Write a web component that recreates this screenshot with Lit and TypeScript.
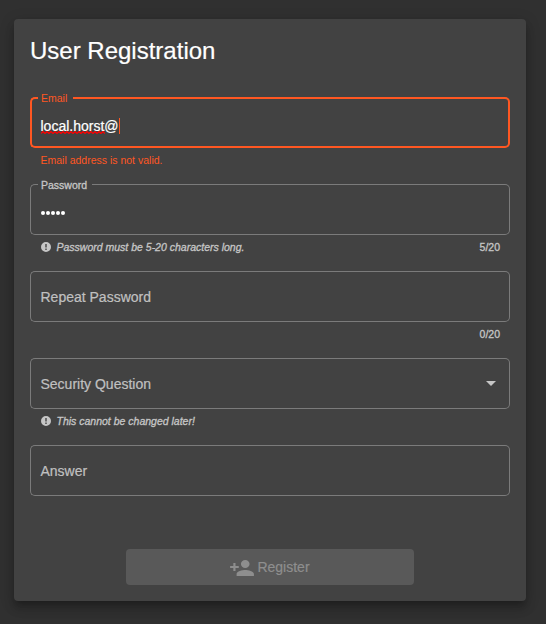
import { LitElement, html, css, svg, nothing } from "lit";
import { customElement, property } from "lit/decorators.js";
import { classMap } from "lit/directives/class-map.js";

@customElement("form-field")
export class FormField extends LitElement {
  @property() label = "";
  @property() hint = "";
  @property() error = "";
  @property() counter = "";
  @property({ type: Boolean }) floating = false;

  static styles = css`
    :host { display: block; height: 87px; font-size: 14px; color: #fff; }
    .box { display: grid; height: 51px; }
    .box > * { grid-area: 1 / 1; }
    .outline { display: flex; --line: 1px solid #7b7b7b; }
    .invalid { --line: 2px solid #ff5722; }
    .outline > * { box-sizing: border-box; border-top: var(--line); border-bottom: var(--line); }
    .start { width: 8px; border-left: var(--line); border-radius: 5px 0 0 5px; }
    .end { flex: 1; border-right: var(--line); border-radius: 0 5px 5px 0; }
    .outline > .notch { border-top: 0; padding: 0 5px 0 3px; font-size: 10.5px; line-height: 12px; color: #c6c6c6; }
    .invalid > .notch { padding-right: 6px; }
    .floated { display: block; margin-top: -5px; white-space: nowrap; -webkit-text-stroke: 0.3px #c6c6c6; }
    .invalid .floated { color: #ff5722; -webkit-text-stroke: 0; }
    .content { display: flex; align-items: center; justify-content: space-between; padding: 7px 10px 0 10.5px; -webkit-text-stroke: 0.2px currentColor; }
    .content.resting { padding-top: 0; color: #c0c0c0; }
    .below { display: flex; justify-content: space-between; padding: 6px 10px 0 10.5px; font-size: 10.5px; line-height: 12px; color: #c6c6c6; -webkit-text-stroke: 0.3px #c6c6c6; }
    .hint { display: flex; font-style: italic; }
    .hint svg { width: 10px; height: 10px; margin: 1px 6px 0 0; fill: #c6c6c6; }
    .error { color: #ff5722; -webkit-text-stroke: 0; }
    .counter { margin-left: auto; }
  `;

  render() {
    const resting = !this.floating;
    return html`
      <div class="box">
        <div class=${classMap({ outline: true, invalid: !!this.error })}>
          <div class="start"></div>
          ${this.floating
            ? html`<div class="notch"><span class="floated">${this.label}</span></div>`
            : nothing}
          <div class="end"></div>
        </div>
        <div class=${classMap({ content: true, resting })}>
          ${resting ? html`<span>${this.label}</span>` : nothing}
          <slot></slot>
        </div>
      </div>
      <div class="below">
        ${this.error ? html`<span class="error">${this.error}</span>` : nothing}
        ${this.hint
          ? html`<span class="hint">
              <svg viewBox="2 2 20 20">${svg`<path d="M12 2a10 10 0 1 0 0 20 10 10 0 0 0 0-20zm1.400 16h-2.800v-2.800h2.800V18zm0-4.800h-2.800V5.800h2.800v7.400z"/>`}</svg>
              <span>${this.hint}</span></span>`
          : nothing}
        ${this.counter ? html`<span class="counter">${this.counter}</span>` : nothing}
      </div>
    `;
  }
}

@customElement("app-root")
export class AppRoot extends LitElement {
  static styles = css`
    :host { display: block; box-sizing: border-box; height: 624px; padding: 19px 20px 0 14px; background: #303030; font-family: "Liberation Sans", Arial, sans-serif; overflow: hidden; }
    .card { box-sizing: border-box; width: 512px; height: 582px; padding: 16px; border-radius: 4px; background: #424242; color: #fff;
      box-shadow: 0 5px 5px -3px rgba(0,0,0,.2), 0 8px 10px 1px rgba(0,0,0,.14), 0 3px 14px 2px rgba(0,0,0,.12); }
    h1 { margin: 0 0 30px; font-size: 24px; font-weight: 400; line-height: 32px; -webkit-text-stroke: 0.2px #fff; }
    .value { display: flex; line-height: 16px; }
    .spell { position: relative; }
    .spell svg { position: absolute; left: 0; top: 13px; width: 64px; height: 3px; fill: none; stroke: #f00; stroke-width: 1.2; }
    .caret { width: 1px; height: 16px; background: #ff5722; margin-left: 0.5px; }
    .dots { display: flex; gap: 1px; margin-top: -1px; }
    .dots i { width: 4px; height: 4px; border-radius: 50%; background: #fff; }
    .arrow { width: 10px; height: 5px; fill: #c6c6c6; margin-right: 4px; }
    .actions { display: flex; justify-content: center; margin-top: 17px; }
    button { display: flex; align-items: center; justify-content: center; width: 288px; height: 36px; padding: 0; border: 0; border-radius: 4px; background: #595959; color: #8e8e8e; font: 14px "Liberation Sans", Arial, sans-serif; -webkit-text-stroke: 0.2px currentColor; }
    button svg { width: 26px; height: 24px; margin: 1px 2px 0 -1px; fill: currentColor; stroke: none; }
  `;

  render() {
    return html`
      <main class="card">
        <h1>User Registration</h1>
        <form-field label="Email" error="Email address is not valid." floating>
          <div class="value"><span class="spell">local.horst<svg viewBox="0 0 64 3"><polyline points=${Array.from({ length: 33 }, (_, i) => `${i * 2},${i % 2 ? 0.5 : 2.5}`).join(" ")} /></svg></span>@<span class="caret"></span></div>
        </form-field>
        <form-field label="Password" hint="Password must be 5-20 characters long." counter="5/20" floating>
          <div class="dots">${[0, 1, 2, 3, 4].map(() => html`<i></i>`)}</div>
        </form-field>
        <form-field label="Repeat Password" counter="0/20"></form-field>
        <form-field label="Security Question" hint="This cannot be changed later!">
          <svg class="arrow" viewBox="0 0 10 5"><path d="M0 0h10L5 5z" /></svg>
        </form-field>
        <form-field label="Answer"></form-field>
        <div class="actions">
          <button disabled>
            <svg viewBox="0 0 24 24" preserveAspectRatio="none"><path d="M15 12c2.210 0 4-1.790 4-4s-1.790-4-4-4-4 1.790-4 4 1.790 4 4 4zm-9-2V7H4v3H1v2h3v3h2v-3h3v-2H6zm9 4c-2.670 0-8 1.340-8 4v2h16v-2c0-2.660-5.330-4-8-4z" /></svg>
            Register
          </button>
        </div>
      </main>
    `;
  }
}
